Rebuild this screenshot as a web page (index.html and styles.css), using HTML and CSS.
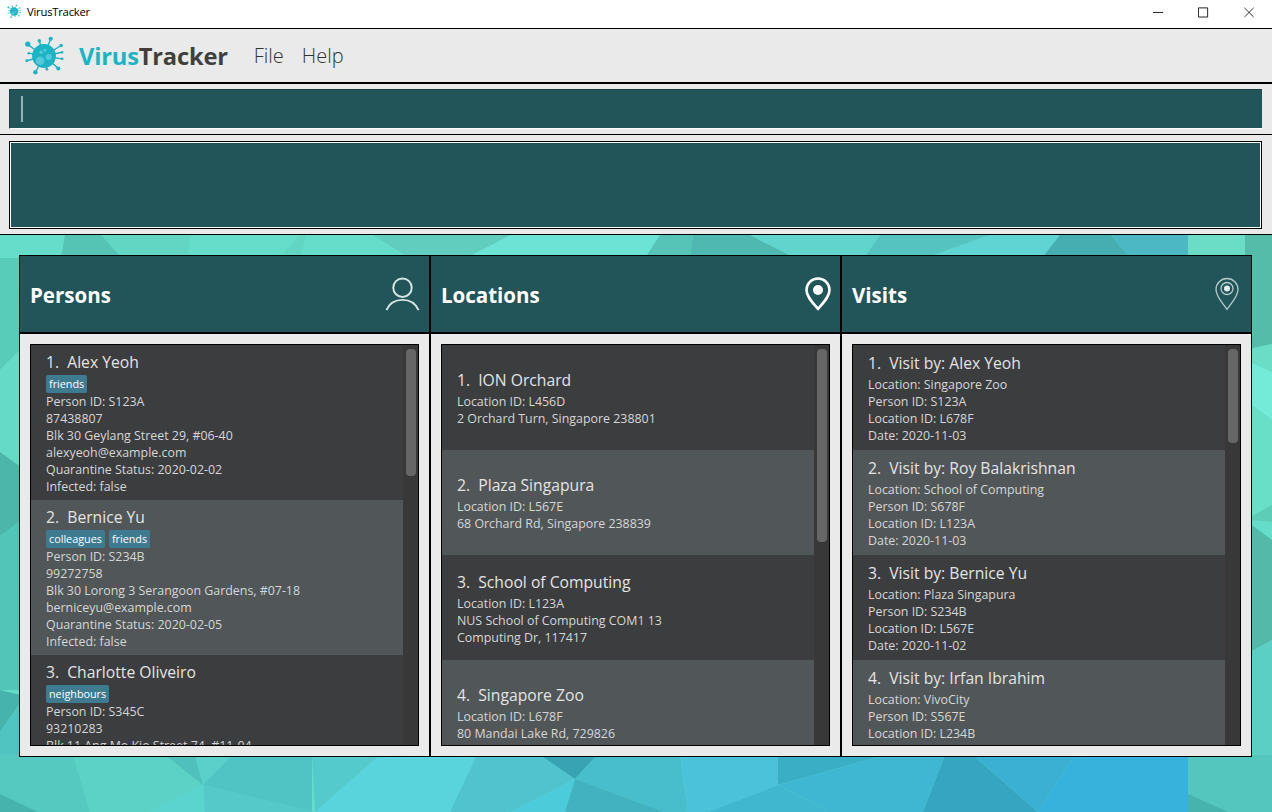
FILE: index.html
```html
<!DOCTYPE html>
<html lang="en">
<head>
<meta charset="utf-8">
<title>VirusTracker</title>
<link rel="stylesheet" href="styles.css">
</head>
<body>
<svg class="defs" width="0" height="0" aria-hidden="true">
  <symbol id="virus" viewBox="0 0 48 44">
    <g stroke="#1cb3c4" stroke-width="1.500">
      <path d="M24 22 7 10M24 22 31 4M24 22 19 6M24 22 42 11M24 22 43 18M24 22 43 25M24 22 39 35M24 22 27 36M24 22 15 39M24 22 6 27M24 22 8 19"/>
    </g>
    <g fill="#1cb3c4">
      <circle cx="7" cy="9.500" r="2.800"/><circle cx="31" cy="4" r="2.200"/><circle cx="19" cy="6" r="1.800"/><circle cx="42" cy="11" r="1.800"/><circle cx="43" cy="18" r="1.300"/><circle cx="43" cy="25" r="1.500"/><circle cx="39" cy="35" r="2.100"/><circle cx="27" cy="36" r="1.500"/><circle cx="15" cy="39" r="2.300"/><circle cx="6" cy="27" r="1.500"/><circle cx="8" cy="19" r="1.300"/>
      <circle cx="24" cy="22" r="12.500"/>
    </g>
    <g fill="#55c9da">
      <circle cx="20" cy="27" r="4.500"/><circle cx="29" cy="23" r="3.200"/><circle cx="21" cy="18" r="1.800"/><circle cx="25" cy="16" r="1.500"/>
    </g>
  </symbol>
</svg>

<header class="titlebar">
  <div class="titlebar-left">
    <svg class="titlebar-icon"><use href="#virus"/></svg>
    <span class="titlebar-name">VirusTracker</span>
  </div>
  <div class="window-controls">
    <svg class="win-btn" viewBox="0 0 12 12"><path d="M0 6.500h11" stroke="#111" fill="none"/></svg>
    <svg class="win-btn" viewBox="0 0 12 12"><path d="M.5 1.500h10v10H.5z" stroke="#111" fill="none"/></svg>
    <svg class="win-btn" viewBox="0 0 12 12"><path d="M.5 1.500l10 10M10.500 1.500l-10 10" stroke="#222" fill="none"/></svg>
  </div>
</header>

<nav class="menubar">
  <svg class="logo-icon"><use href="#virus"/></svg>
  <div class="logo-text"><span class="logo-virus">Virus</span>Tracker</div>
  <div class="menu">
    <span>File</span>
    <span>Help</span>
  </div>
</nav>

<section class="command-bar">
  <div class="command-box"><div class="caret"></div></div>
</section>

<section class="result-bar">
  <div class="result-box"></div>
</section>

<main class="main">
  <svg class="bg" viewBox="0 235 1272 577" preserveAspectRatio="none" aria-hidden="true">
    <rect x="0" y="235" width="1272" height="577" fill="#66dcca"/>
    <!-- top strip -->
    <polygon points="65,235 101,235 122,258 61,258" fill="#55c4b5"/>
    <polygon points="101,235 190,235 188,258 122,258" fill="#62d5c3"/>
    <polygon points="300,235 306,235 300,258 280,258" fill="#62d5c3"/>
    <polygon points="373,235 511,235 466,258 410,258" fill="#60cdbf"/>
    <polygon points="511,235 660,235 645,258 466,258" fill="#6ce3d4"/>
    <polygon points="660,235 693,235 690,258 645,258" fill="#57c4b8"/>
    <polygon points="693,235 750,235 795,258 690,258" fill="#4fb8b0"/>
    <polygon points="750,235 880,235 864,258 795,258" fill="#60d4cd"/>
    <polygon points="880,235 990,235 925,258 864,258" fill="#55c4c0"/>
    <polygon points="990,235 1060,235 1042,258 925,258" fill="#60d3d3"/>
    <polygon points="1060,235 1111,235 1130,258 1042,258" fill="#46aeb0"/>
    <polygon points="1111,235 1188,235 1188,258 1130,258" fill="#4bb8c4"/>
    <polygon points="1188,235 1253,235 1253,258 1188,258" fill="#6bdcc6"/>
    <!-- left strip -->
    <polygon points="0,258 25,258 25,345 0,370" fill="#58cbb9"/>
    <polygon points="0,370 25,345 25,470 0,452" fill="#65dbc7"/>
    <polygon points="0,452 25,470 25,518 0,536" fill="#4cb6aa"/>
    <polygon points="0,536 25,518 25,690 0,690" fill="#52c4b8"/>
    <polygon points="0,690 25,696 0,732" fill="#46b3ad"/>
    <polygon points="0,732 25,696 25,760 0,760" fill="#50c4c0"/>
    <!-- right strip -->
    <polygon points="1245,235 1272,235 1272,344 1245,350" fill="#55bcaa"/>
    <polygon points="1245,350 1272,344 1272,372 1245,360" fill="#6bdcc6"/>
    <polygon points="1245,360 1272,372 1272,420 1245,400" fill="#74ead8"/>
    <polygon points="1245,400 1272,420 1272,505 1245,520" fill="#6adfc8"/>
    <polygon points="1245,520 1272,505 1272,522 1250,520" fill="#5ecdb8"/>
    <polygon points="1245,520 1272,540 1272,640 1245,655" fill="#54b9a9"/>
    <polygon points="1245,655 1272,640 1272,760 1245,760" fill="#5ccfc5"/>
    <!-- bottom strip -->
    <polygon points="0,755 73,755 90,812 0,812" fill="#55c9bf"/>
    <polygon points="0,794 38,812 0,812" fill="#46b3ad"/>
    <polygon points="73,755 165,755 203,785 150,812 90,812" fill="#5cd1c6"/>
    <polygon points="165,755 195,755 203,785" fill="#50c0bc"/>
    <polygon points="195,755 232,755 203,785" fill="#5bcfca"/>
    <polygon points="232,755 312,755 312,812 203,785" fill="#50c4c4"/>
    <polygon points="203,785 205,812 150,812" fill="#5bd3cf"/>
    <polygon points="203,785 315,812 205,812" fill="#55c9c9"/>
    <polygon points="312,755 380,755 315,812" fill="#55cacc"/>
    <polygon points="380,755 477,755 450,812 315,812" fill="#59d3dc"/>
    <polygon points="477,755 540,755 575,779 510,812 450,812" fill="#50c3cf"/>
    <polygon points="540,755 597,755 575,779" fill="#37a3b3"/>
    <polygon points="597,755 680,755 688,812 665,812 575,779" fill="#48bdcc"/>
    <polygon points="575,779 565,812 510,812" fill="#4ccbdb"/>
    <polygon points="575,779 665,812 565,812" fill="#42b2c0"/>
    <polygon points="680,755 778,755 778,785 708,812 688,812" fill="#4bc2da"/>
    <polygon points="778,755 885,755 778,785" fill="#3aaec4"/>
    <polygon points="778,785 885,755 945,755 923,812 830,812" fill="#40b7d2"/>
    <polygon points="778,785 830,812 708,812" fill="#40b6cf"/>
    <polygon points="945,755 973,755 1038,812 923,812" fill="#35a5c2"/>
    <polygon points="973,755 1075,755 1038,812" fill="#3bb0d2"/>
    <polygon points="1075,755 1188,755 1188,812 1038,812" fill="#36b2dc"/>
    <polygon points="1188,755 1272,755 1272,812 1188,812" fill="#55c6be"/>
    <polygon points="1188,794 1228,812 1188,812" fill="#46b3ad"/>
  </svg>

  <div class="panels">
    <section class="panel">
      <header class="panel-head">
        <h2>Persons</h2>
        <svg class="panel-icon person-icon" viewBox="0 0 36 36"><circle cx="18" cy="11" r="9.500" fill="none" stroke="#d6e6e4" stroke-width="2"/><path d="M1.500 34c3-7 9-10.500 16.500-10.500S31.500 27 34.500 34" fill="none" stroke="#d6e6e4" stroke-width="2"/></svg>
      </header>
      <div class="panel-body">
        <div class="list">
          <div class="rows">
            <article class="row person">
              <div class="name">1.  Alex Yeoh</div>
              <div class="tags"><span class="tag">friends</span></div>
              <p>Person ID: S123A</p><p>87438807</p><p>Blk 30 Geylang Street 29, #06-40</p><p>alexyeoh@example.com</p><p>Quarantine Status: 2020-02-02</p><p>Infected: false</p>
            </article>
            <article class="row person alt">
              <div class="name">2.  Bernice Yu</div>
              <div class="tags"><span class="tag">colleagues</span><span class="tag">friends</span></div>
              <p>Person ID: S234B</p><p>99272758</p><p>Blk 30 Lorong 3 Serangoon Gardens, #07-18</p><p>berniceyu@example.com</p><p>Quarantine Status: 2020-02-05</p><p>Infected: false</p>
            </article>
            <article class="row person">
              <div class="name">3.  Charlotte Oliveiro</div>
              <div class="tags"><span class="tag">neighbours</span></div>
              <p>Person ID: S345C</p><p>93210283</p><p>Blk 11 Ang Mo Kio Street 74, #11-04</p>
            </article>
          </div>
          <div class="scrollbar"><div class="thumb thumb-persons"></div></div>
        </div>
      </div>
    </section>

    <section class="panel">
      <header class="panel-head">
        <h2>Locations</h2>
        <svg class="panel-icon pin" viewBox="0 0 26 34"><path d="M13 32C8 26 1.500 20 1.500 13a11.500 11.500 0 0 1 23 0C24.500 20 18 26 13 32z" fill="none" stroke="#fff" stroke-width="2.600" stroke-linejoin="round"/><circle cx="13" cy="13" r="5" fill="#fff"/></svg>
      </header>
      <div class="panel-body">
        <div class="list">
          <div class="rows">
            <article class="row place">
              <div class="name">1.  ION Orchard</div>
              <p>Location ID: L456D</p><p>2 Orchard Turn, Singapore 238801</p>
            </article>
            <article class="row place alt">
              <div class="name">2.  Plaza Singapura</div>
              <p>Location ID: L567E</p><p>68 Orchard Rd, Singapore 238839</p>
            </article>
            <article class="row place wrapped">
              <div class="name">3.  School of Computing</div>
              <p>Location ID: L123A</p><p>NUS School of Computing COM1 13</p><p>Computing Dr, 117417</p>
            </article>
            <article class="row place alt">
              <div class="name">4.  Singapore Zoo</div>
              <p>Location ID: L678F</p><p>80 Mandai Lake Rd, 729826</p>
            </article>
          </div>
          <div class="scrollbar"><div class="thumb thumb-locations"></div></div>
        </div>
      </div>
    </section>

    <section class="panel">
      <header class="panel-head">
        <h2>Visits</h2>
        <svg class="panel-icon pin-thin" viewBox="0 0 24 34"><path d="M12 32.500C8 26 1 20 1 12.500a11 11 0 0 1 22 0C23 20 16 26 12 32.500z" fill="none" stroke="#b5cbca" stroke-width="1.300" stroke-linejoin="round"/><circle cx="12" cy="11.500" r="6" fill="none" stroke="#b5cbca" stroke-width="1.300"/><circle cx="12" cy="11.500" r="3" fill="#e4eeed"/></svg>
      </header>
      <div class="panel-body">
        <div class="list">
          <div class="rows">
            <article class="row visit">
              <div class="name">1.  Visit by: Alex Yeoh</div>
              <p>Location: Singapore Zoo</p><p>Person ID: S123A</p><p>Location ID: L678F</p><p>Date: 2020-11-03</p>
            </article>
            <article class="row visit alt">
              <div class="name">2.  Visit by: Roy Balakrishnan</div>
              <p>Location: School of Computing</p><p>Person ID: S678F</p><p>Location ID: L123A</p><p>Date: 2020-11-03</p>
            </article>
            <article class="row visit">
              <div class="name">3.  Visit by: Bernice Yu</div>
              <p>Location: Plaza Singapura</p><p>Person ID: S234B</p><p>Location ID: L567E</p><p>Date: 2020-11-02</p>
            </article>
            <article class="row visit alt">
              <div class="name">4.  Visit by: Irfan Ibrahim</div>
              <p>Location: VivoCity</p><p>Person ID: S567E</p><p>Location ID: L234B</p>
            </article>
          </div>
          <div class="scrollbar"><div class="thumb thumb-visits"></div></div>
        </div>
      </div>
    </section>
  </div>
</main>
</body>
</html>
```

FILE: styles.css
```css
* { box-sizing: border-box; }
html, body { margin: 0; height: 100%; }
body {
  width: 1272px;
  height: 812px;
  overflow: hidden;
  display: flex;
  flex-direction: column;
  font-family: "Open Sans", "Noto Sans", "Liberation Sans", sans-serif;
  background: #eaeaea;
}
.defs { position: absolute; }

.titlebar {
  height: 29px;
  flex: none;
  background: #fff;
  border-bottom: 1px solid #000;
  display: flex;
  align-items: center;
  justify-content: space-between;
}
.titlebar-left { display: flex; align-items: center; padding-left: 6px; padding-bottom: 5px; }
.titlebar-icon { width: 16px; height: 15px; }
.titlebar-name { margin-left: 5px; font-size: 11.300px; letter-spacing: -0.25px; color: #000; }
.window-controls { display: flex; padding-right: 17px; gap: 34px; padding-bottom: 4px; }
.win-btn { width: 11px; height: 12px; display: block; }
.win-btn:last-child { margin-left: 1px; }

.menubar {
  height: 55px;
  flex: none;
  background: #eaeaea;
  border-bottom: 2px solid #000;
  display: flex;
  align-items: center;
  padding-left: 21px;
}
.logo-icon { width: 46px; height: 42px; flex: none; }
.logo-text { margin-left: 12px; font-size: 23.700px; font-weight: 700; color: #3f3f3f; letter-spacing: -0.2px; }
.logo-virus { color: #1cb3c4; }
.menu { display: flex; gap: 18px; margin-left: 26px; font-size: 20px; font-weight: 300; color: #333; }

.command-bar {
  height: 51px;
  flex: none;
  padding: 5px 10px 5px 9px;
  border-bottom: 1px solid #000;
}
.command-box {
  height: 40px;
  background: #22555a;
  border-top: 1px solid #1a3f43;
  border-left: 1px solid #1a3f43;
  border-bottom: 1px solid #fff;
  padding: 6px 11px;
}
.caret { width: 2px; height: 26px; background: #8fb5b3; }

.result-bar {
  height: 100px;
  flex: none;
  padding: 6px 10px 5px 9px;
  border-bottom: 1px solid #000;
}
.result-box {
  height: 88px;
  background: #22555a;
  border: 1px solid #000;
  box-shadow: inset 0 0 0 1px #fff;
}

.main {
  position: relative;
  flex: 1;
  min-height: 0;
  padding: 20px 20px 55px 19px;
}
.bg { position: absolute; inset: 0; width: 100%; height: 100%; display: block; }
.panels {
  position: relative;
  display: grid;
  grid-template-columns: repeat(3, 411px);
  height: 502px;
}
.panel {
  display: flex;
  flex-direction: column;
  min-height: 0;
  border: 1px solid #000;
  background: #eaeaea;
}
.panel-head {
  height: 78px;
  flex: none;
  background: #22555a;
  border-bottom: 2px solid #000;
  display: flex;
  align-items: center;
  justify-content: space-between;
  padding: 0 10px;
}
.panel-head h2 { margin: 1px 0 0; font-size: 20.500px; font-weight: 700; color: #fff; }
.panel-icon { width: 35px; height: 35px; display: block; }
.person-icon { margin-right: -1px; }
.pin { width: 26px; height: 34px; margin-right: -1px; }
.pin-thin { width: 24px; height: 34px; margin-right: 2px; }
.panel-body { flex: 1; min-height: 0; padding: 10px; }

.list {
  height: 100%;
  border: 1px solid #000;
  background: #3c3d3f;
  display: flex;
  overflow: hidden;
}
.rows { flex: 1; min-width: 0; overflow: hidden; }
.row {
  min-height: 105px;
  display: flex;
  flex-direction: column;
  justify-content: center;
  padding: 0 15px;
  background: #3c3d3f;
  color: #d6d6d6;
}
.row.person { justify-content: flex-start; padding-top: 6px; padding-bottom: 5px; }
.row.visit { justify-content: flex-start; padding-top: 7px; }
.row.wrapped { padding-top: 2px; }
.row.alt { background: #515658; }
.row p {
  margin: 0;
  font-size: 12.400px;
  line-height: 17px;
  white-space: nowrap;
}
.name {
  font-size: 15.700px;
  line-height: 22px;
  color: #e4e4e4;
  white-space: pre;
}
.place .name, .visit .name { margin-bottom: 2px; }
.tags { display: flex; gap: 4px; margin-top: 2px; }
.tag {
  height: 18px;
  line-height: 18px;
  padding: 0 3px;
  font-size: 10.800px;
  color: #fff;
  background: #3e7b91;
  border-radius: 2px;
}
.scrollbar {
  width: 15px;
  flex: none;
  background: #383838;
  padding: 4px 2px 0 3px;
}
.thumb { width: 10px; background: #666; border-radius: 4px; }
.thumb-persons { height: 127px; }
.thumb-locations { height: 193px; }
.thumb-visits { height: 94px; }
```
